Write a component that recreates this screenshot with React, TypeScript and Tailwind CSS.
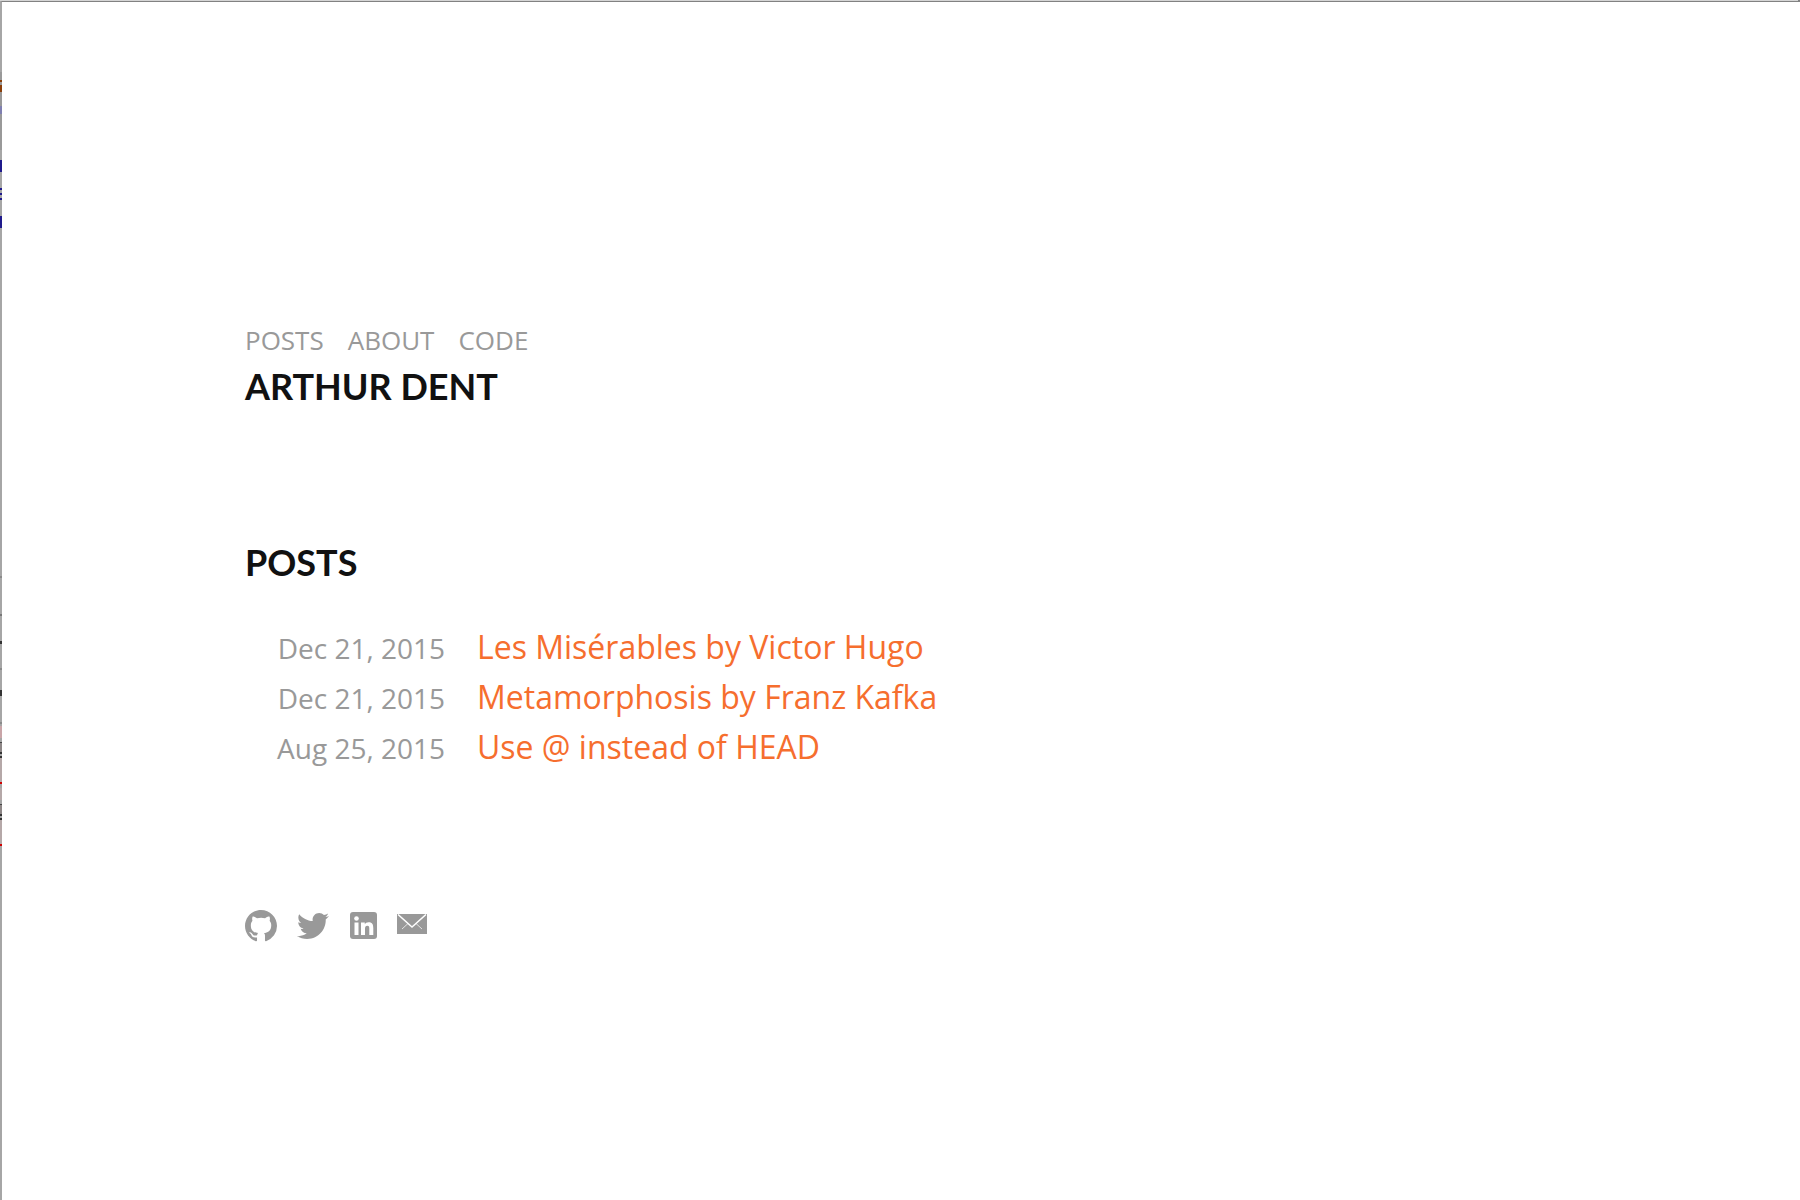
import { FaTwitter } from "react-icons/fa";

const nav = ["Posts", "About", "Code"];

const posts = [
  { date: "Dec 21, 2015", title: "Les Misérables by Victor Hugo" },
  { date: "Dec 21, 2015", title: "Metamorphosis by Franz Kafka" },
  { date: "Aug 25, 2015", title: "Use @ instead of HEAD" },
];

// Specks of the window behind, seen along the left edge: [top, height, colour]
const specks: [number, number, string][] = [
  [72, 78, "#999999"],
  [80, 2, "#8a3f0a"],
  [85, 7, "#8a3f0a"],
  [106, 8, "#7f7fb0"],
  [160, 12, "#1f1a8c"],
  [188, 2, "#1f1a8c"],
  [193, 2, "#1f1a8c"],
  [198, 2, "#1f1a8c"],
  [216, 12, "#1f1a8c"],
  [576, 2, "#8a8a8a"],
  [614, 2, "#777777"],
  [641, 3, "#333333"],
  [668, 2, "#8a8a8a"],
  [690, 6, "#333333"],
  [722, 2, "#8a8a8a"],
  [726, 12, "#c9a5a8"],
  [742, 10, "#8d8686"],
  [742, 1, "#444444"],
  [752, 2, "#333333"],
  [756, 2, "#333333"],
  [758, 24, "#b5a8a8"],
  [782, 2, "#d00000"],
  [788, 12, "#b5a8a8"],
  [804, 1, "#444444"],
  [805, 9, "#8d8686"],
  [814, 2, "#333333"],
  [818, 2, "#333333"],
  [820, 24, "#b5a8a8"],
  [844, 2, "#d00000"],
];

function GithubIcon() {
  return (
    <svg viewBox="0 0 16 16" className="size-8" fill="currentColor" aria-hidden="true">
      <path d="M8 0C3.58 0 0 3.58 0 8c0 3.54 2.29 6.53 5.47 7.59.4.07.55-.17.55-.38 0-.19-.01-.82-.01-1.49-2.01.37-2.53-.49-2.69-.94-.09-.23-.48-.94-.82-1.13-.28-.15-.68-.52-.01-.53.63-.01 1.08.58 1.23.82.72 1.21 1.87.87 2.33.66.07-.52.28-.87.51-1.07-1.78-.2-3.64-.89-3.64-3.95 0-.87.31-1.59.82-2.15-.08-.2-.36-1.02.08-2.12 0 0 .67-.21 2.2.82.64-.18 1.32-.27 2-.27s1.36.09 2 .27c1.53-1.04 2.2-.82 2.2-.82.44 1.1.16 1.92.08 2.12.51.56.82 1.27.82 2.15 0 3.07-1.87 3.75-3.65 3.95.29.25.54.73.54 1.48 0 1.07-.01 1.93-.01 2.2 0 .21.15.46.55.38A8.01 8.01 0 0 0 16 8c0-4.42-3.58-8-8-8z" />
    </svg>
  );
}

function LinkedinIcon() {
  return (
    <svg viewBox="0 0 28 28" className="size-7" aria-hidden="true">
      <rect x="1" y="0" width="27" height="27" rx="3" fill="currentColor" />
      <g fill="white">
        <circle cx="7.500" cy="6.500" r="2.300" />
        <rect x="5.500" y="10.500" width="4" height="12.500" />
        <path d="M12 10.500h3.800v1.700c.6-1.100 2-2 3.800-2 4 0 4.700 2.600 4.700 6V23h-4v-6c0-1.500 0-3.300-2-3.300s-2.300 1.600-2.300 3.200V23h-4z" />
      </g>
    </svg>
  );
}

function MailIcon() {
  return (
    <svg viewBox="0 0 30 20" className="h-5 w-[30px]" aria-hidden="true">
      <path d="M0 0h30v20H0z" fill="currentColor" />
      <path d="M1 0.500L15 13L29 0.500" fill="none" stroke="white" strokeWidth="1.500" />
      <path d="M5 15L11 9.500M25 15L19 9.500" fill="none" stroke="white" strokeOpacity="0.700" />
    </svg>
  );
}

export default function App() {
  return (
    <div className="relative min-h-screen border-t-2 border-l-2 border-t-[#828282] border-l-[#a6a6a6] bg-white font-['Open_Sans',sans-serif] text-[#999999]">
      <div className="absolute -top-0.5 -left-0.5 h-px w-full bg-[#d5d5d5]" />
      {specks.map(([top, height, color]) => (
        <span
          key={`${top}-${height}`}
          className="absolute -left-0.5 w-0.5"
          style={{ top: top - 2, height, backgroundColor: color }}
        />
      ))}

      <div className="px-[243px] pt-[316px]">
        <header>
          <nav className="flex gap-6 text-[26px] leading-11 uppercase">
            {nav.map((item) => (
              <a key={item} href={`#${item.toLowerCase()}`}>
                {item}
              </a>
            ))}
          </nav>
          <h1 className="font-['Lato',sans-serif] text-4xl leading-12 font-bold text-[#111111] uppercase">
            <a href="#home">Arthur Dent</a>
          </h1>
        </header>

        <main className="pt-32">
          <h2 className="font-['Lato',sans-serif] text-4xl leading-12 font-bold text-[#111111] uppercase">
            Posts
          </h2>
          <ul className="pt-9">
            {posts.map((post) => (
              <li key={post.title} className="flex h-[50px] items-baseline gap-8 leading-[50px]">
                <time className="w-[200px] text-right text-[28px]">{post.date}</time>
                <a href="#post" className="text-[32px] text-[#f66e2e]">
                  {post.title}
                </a>
              </li>
            ))}
          </ul>
        </main>

        <footer className="flex items-center gap-5 pt-[138px]">
          <a href="#github" aria-label="GitHub">
            <GithubIcon />
          </a>
          <a href="#twitter" aria-label="Twitter">
            <FaTwitter className="size-8" />
          </a>
          <a href="#linkedin" aria-label="LinkedIn">
            <LinkedinIcon />
          </a>
          <a href="#mail" aria-label="Email" className="pb-1">
            <MailIcon />
          </a>
        </footer>
      </div>
    </div>
  );
}
